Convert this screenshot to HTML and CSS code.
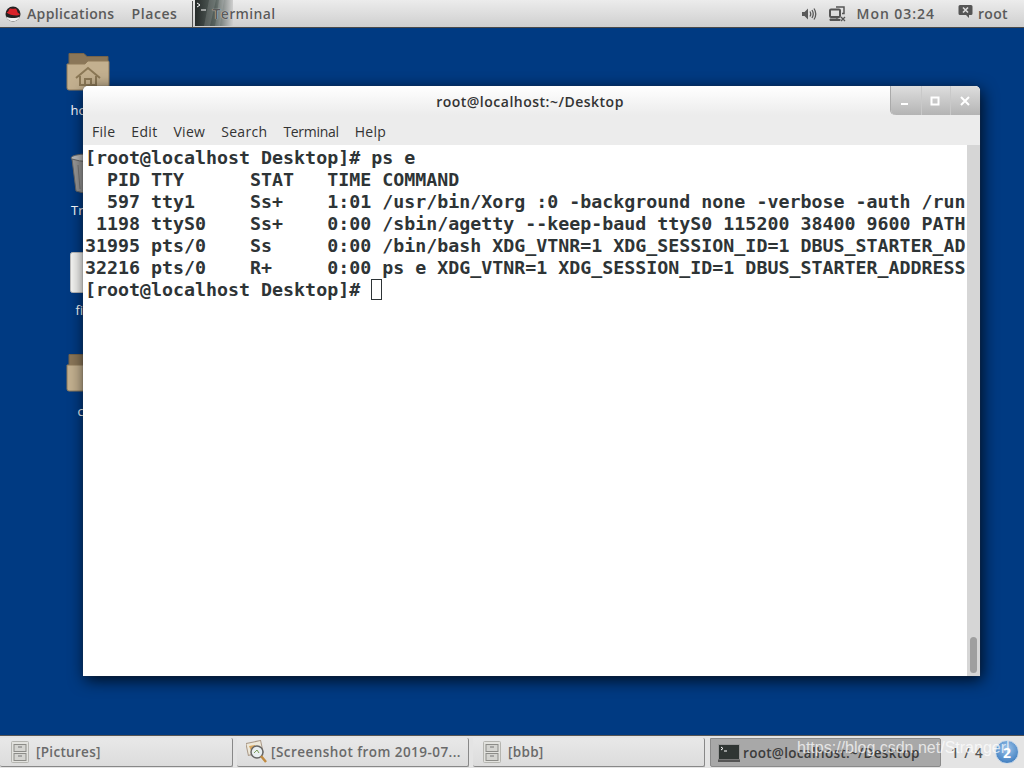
FILE: index.html
```html
<!DOCTYPE html>
<html lang="en">
<head>
<meta charset="utf-8">
<title>Desktop</title>
<link rel="stylesheet" href="styles.css">
</head>
<body>
<header class="topbar">
  <svg class="redhat" width="16" height="16" viewBox="0 0 16 16"><circle cx="8" cy="8" r="7.500" fill="#222"/><path d="M1 10.500a7.500 7.500 0 0 0 14 0C11 12.500 5 12.500 1 10.500z" fill="#f0f0f0"/><path d="M1.500 6.500C3 6 3.500 5.500 4 3.500 5 1.800 6.800 2.800 8 2.800c1.400 0 2.800-1 3.500.5l1.300 3.500c1.400.5 2.400 1.200 1.800 2-2 1.500-10 .8-13.100-2.300z" fill="#d8232a"/></svg>
  <span class="menu-item apps">Applications</span>
  <span class="menu-item places">Places</span>
  <span class="sep"></span>
  <div class="app-launcher">
    <svg class="app-thumb" width="38" height="26" viewBox="0 0 38 26"><defs><linearGradient id="fade" x1="0" x2="1" y1="0" y2="0"><stop offset="0" stop-color="#262b2a"/><stop offset=".55" stop-color="#5a6561"/><stop offset="1" stop-color="#cfcfcf"/></linearGradient></defs><rect width="38" height="26" fill="url(#fade)"/><path d="M14 0h7L15 26H9zM24 0h5l-4 26h-5z" fill="#fff" opacity=".12"/><path d="M2 3l3 2-3 2" fill="none" stroke="#fff"/><path d="M6 10h5" stroke="#fff"/></svg>
    <span class="menu-item app-label">Terminal</span>
  </div>
  <div class="tray">
    <svg class="vol" width="16" height="14" viewBox="0 0 16 14"><path d="M1 5h2.500L7 1.500v11L3.500 9H1z" fill="#5a5a5a"/><path d="M9 4.500q1.500 2.500 0 5M11 3q2.500 4 0 8M13 1.500q3.500 5.500 0 11" fill="none" stroke="#5a5a5a" stroke-width="1.300"/></svg>
    <svg class="net" width="17" height="16" viewBox="0 0 17 16"><rect x="1" y="3.500" width="10" height="7.500" rx="1" fill="none" stroke="#555" stroke-width="2"/><path d="M4 11.500h4V13H1v1.500h10V13" fill="#555" stroke="#555"/><path d="M7 1h8v6.500h-2" fill="none" stroke="#555" stroke-width="1.500"/><path d="M12 11l4 4m0-4l-4 4" stroke="#555" stroke-width="1.300"/></svg>
    <span class="menu-item clock">Mon 03:24</span>
    <svg class="chat" width="15" height="15" viewBox="0 0 15 15"><path d="M2 1h11a1.500 1.500 0 0 1 1.500 1.500v7A1.500 1.500 0 0 1 13 11h-2v3l-3-3H2A1.500 1.500 0 0 1 .5 9.500v-7A1.500 1.500 0 0 1 2 1z" fill="#555"/><path d="M5 3.500l5 5m0-5l-5 5" stroke="#ddd" stroke-width="1.600"/></svg>
    <span class="menu-item user">root</span>
  </div>
</header>

<main class="desktop">
  <div class="desk-icon home-icon">
    <svg width="44" height="40" viewBox="0 0 44 40"><path d="M3 1.500h15l3 3h21v30H3z" fill="#8a7658" stroke="#75634a"/><path d="M1 12h18l3-3h20a1 1 0 0 1 1 1v27a1 1 0 0 1-1 1H3a2 2 0 0 1-2-2z" fill="#c3b08f" stroke="#8f7b5b"/><path d="M10 26l12-10 12 10M14 24v9h16v-9M19 33v-6h6v6" fill="none" stroke="#8b7856" stroke-width="2"/></svg>
    <span class="desk-label">home</span>
  </div>
  <div class="desk-icon trash-icon">
    <svg width="44" height="42" viewBox="0 0 44 42"><ellipse cx="21" cy="5" rx="16" ry="4" fill="#bbb" stroke="#666"/><path d="M6 6l4 32q11 4 22 0l4-32q-15 5-30 0z" fill="#989898" stroke="#666"/><path d="M12 12l2 24M21 13v25M30 12l-2 24" stroke="#777"/></svg>
    <span class="desk-label">Trash</span>
  </div>
  <div class="desk-icon file-icon">
    <svg width="44" height="42" viewBox="0 0 44 42"><rect x=".5" y=".5" width="40" height="40" rx="2" fill="#f4f4f2" stroke="#bbb"/></svg>
    <span class="desk-label">file01</span>
  </div>
  <div class="desk-icon folder-icon">
    <svg width="44" height="40" viewBox="0 0 44 40"><path d="M3 1.500h15l3 3h21v30H3z" fill="#8a7658" stroke="#75634a"/><path d="M1 12h18l3-3h20a1 1 0 0 1 1 1v27a1 1 0 0 1-1 1H3a2 2 0 0 1-2-2z" fill="#c3b08f" stroke="#8f7b5b"/></svg>
    <span class="desk-label">c++</span>
  </div>

  <section class="window">
    <div class="titlebar">
      <span class="win-title">root@localhost:~/Desktop</span>
      <div class="win-buttons">
        <span class="win-btn"><svg width="10" height="10" viewBox="0 0 10 10"><rect x="1" y="7" width="7" height="2" fill="#fff"/></svg></span>
        <span class="win-btn"><svg width="10" height="10" viewBox="0 0 10 10"><rect x="1.500" y="1.500" width="7" height="7" fill="none" stroke="#fff" stroke-width="2"/></svg></span>
        <span class="win-btn"><svg width="10" height="10" viewBox="0 0 10 10"><path d="M1 1l8 8m0-8l-8 8" stroke="#fff" stroke-width="2"/></svg></span>
      </div>
    </div>
    <nav class="win-menu">
      <span>File</span><span>Edit</span><span>View</span><span>Search</span><span class="menu-tight">Terminal</span><span>Help</span>
    </nav>
    <div class="term-wrap">
      <pre class="terminal">[root@localhost Desktop]# ps e
  PID TTY      STAT   TIME COMMAND
  597 tty1     Ss+    1:01 /usr/bin/Xorg :0 -background none -verbose -auth /run
 1198 ttyS0    Ss+    0:00 /sbin/agetty --keep-baud ttyS0 115200 38400 9600 PATH
31995 pts/0    Ss     0:00 /bin/bash XDG_VTNR=1 XDG_SESSION_ID=1 DBUS_STARTER_AD
32216 pts/0    R+     0:00 ps e XDG_VTNR=1 XDG_SESSION_ID=1 DBUS_STARTER_ADDRESS
[root@localhost Desktop]# <span class="cursor"> </span></pre>
      <div class="scrollbar"><span class="thumb"></span></div>
    </div>
  </section>
</main>

<footer class="taskbar">
  <div class="task task-1">
    <svg class="cab" width="18" height="22" viewBox="0 0 18 22"><rect x=".5" y=".5" width="17" height="21" rx="1" fill="#e2e2de" stroke="#b5b5b0"/><rect x="3" y="3.500" width="12" height="7" fill="#d4d4d0" stroke="#8c8c88"/><rect x="3" y="12.500" width="12" height="7" fill="#d4d4d0" stroke="#8c8c88"/><path d="M7 6h4M7 15h4" stroke="#777"/></svg>
    <span>[Pictures]</span>
  </div>
  <div class="task task-2">
    <svg class="shot" width="22" height="24" viewBox="0 0 22 24"><rect x="1" y="2" width="15" height="12" fill="#eee8d8" stroke="#a98" transform="rotate(-12 8 8)"/><path d="M3 6l6-1 1 4-5 2z" fill="#d9a860"/><circle cx="11" cy="12" r="6" fill="#e8eef0" stroke="#666" stroke-width="1.500"/><path d="M8 13l3-3 2 3" stroke="#7a9b5a" fill="none"/><path d="M15 16l5 6" stroke="#c08a40" stroke-width="2.500"/></svg>
    <span>[Screenshot from 2019-07...</span>
  </div>
  <div class="task task-3">
    <svg class="cab" width="18" height="22" viewBox="0 0 18 22"><rect x=".5" y=".5" width="17" height="21" rx="1" fill="#e2e2de" stroke="#b5b5b0"/><rect x="3" y="3.500" width="12" height="7" fill="#d4d4d0" stroke="#8c8c88"/><rect x="3" y="12.500" width="12" height="7" fill="#d4d4d0" stroke="#8c8c88"/><path d="M7 6h4M7 15h4" stroke="#777"/></svg>
    <span>[bbb]</span>
  </div>
  <div class="task task-4">
    <svg class="term-ico" width="22" height="18" viewBox="0 0 22 18"><rect x=".5" y=".5" width="21" height="15" fill="#2f3533" stroke="#999"/><rect y="15.500" width="22" height="2.500" fill="#555"/><path d="M3 3l2 1.500L3 6M6 7h3" stroke="#fff" fill="none"/></svg>
    <span>root@localhost:~/Desktop</span>
  </div>
  <div class="pager">
    <span class="pager-count">1 / 4</span>
    <span class="badge">2</span>
  </div>
</footer>
<div class="watermark">https://blog.csdn.net/Strangerl</div>
</body>
</html>
```
FILE: styles.css
```css
html, body {
  margin: 0;
  padding: 0;
  width: 1024px;
  height: 768px;
  overflow: hidden;
}
body {
  display: flex;
  flex-direction: column;
  position: relative;
  background: #003a82;
  font-family: "Open Sans", "Noto Sans", sans-serif;
}
.topbar {
  flex: 0 0 27px;
  height: 27px;
  display: flex;
  align-items: center;
  background: linear-gradient(#ececec, #cfcfcf);
  border-bottom: 1px solid #4a4a4a;
  padding-left: 5px;
}
.menu-item {
  font-size: 14px;
  font-weight: 600;
  color: #5a5a5a;
  letter-spacing: .35px;
}
.redhat { margin-right: 6px; }
.apps { margin-right: 17px; }
.places { margin-right: 14px; letter-spacing: .6px; }
.sep {
  width: 1px;
  height: 26px;
  background: #555;
  margin-right: 2px;
}
.app-launcher {
  display: flex;
  align-items: center;
  position: relative;
  width: 84px;
  height: 27px;
}
.app-thumb { display: block; margin-bottom: 1px; }
.app-label {
  position: absolute;
  left: 18px;
  top: 4px;
  text-shadow: 0 0 1px #fff;
}
.tray {
  margin-left: auto;
  display: flex;
  align-items: center;
  padding-right: 16px;
}
.vol { margin-right: 12px; }
.net { margin-right: 11px; }
.clock { margin-right: 23px; letter-spacing: .95px; }
.chat { margin-right: 5px; margin-top: -4px; }
.desktop {
  flex: 1;
  position: relative;
}
.desk-icon {
  position: absolute;
  width: 90px;
  display: flex;
  flex-direction: column;
  align-items: center;
}
.desk-icon svg { display: block; }
.desk-label {
  color: #fff;
  font-size: 13px;
  margin-top: 6px;
}
.home-icon { left: 43px; top: 24px; }
.home-icon .desk-label { margin-top: 9px; }
.trash-icon { left: 43px; top: 125px; }
.file-icon { left: 47px; top: 224px; }
.file-icon .desk-label { margin-top: 7px; }
.folder-icon { left: 43px; top: 325px; }
.folder-icon .desk-label { margin-top: 9px; }
.window {
  position: absolute;
  left: 83px;
  top: 58px;
  width: 897px;
  height: 590px;
  display: flex;
  flex-direction: column;
  background: #ececec;
  border-radius: 5px 5px 0 0;
  box-shadow: 0 0 1px #444, 2px 4px 16px rgba(0, 0, 0, .8);
  overflow: hidden;
}
.titlebar {
  flex: 0 0 29px;
  display: flex;
  align-items: flex-start;
  justify-content: center;
  position: relative;
  background: linear-gradient(#fff, #ececec);
}
.win-title {
  font-size: 14px;
  font-weight: 600;
  color: #333;
  line-height: 26px;
  margin-top: 3px;
  letter-spacing: .5px;
  margin-left: -3px;
}
.win-buttons {
  position: absolute;
  right: 0;
  top: 0;
  height: 29px;
  display: flex;
  background: linear-gradient(#dedede, #b4b4b4);
  border-radius: 0 0 0 5px;
  box-shadow: -1px 0 0 #aaa;
}
.win-btn {
  width: 29.670px;
  display: flex;
  align-items: center;
  justify-content: center;
  border-left: 1px solid #c9c9c9;
  box-sizing: border-box;
}
.win-btn svg { margin-right: 2px; }
.win-btn:first-child { border-left: 0; }
.win-menu {
  flex: 0 0 30px;
  box-sizing: border-box;
  padding: 3px 0 0 9px;
  display: flex;
  gap: 16px;
  align-items: center;
  font-size: 14px;
  letter-spacing: .3px;
  color: #333;
}
.menu-tight { letter-spacing: -.3px; }
.term-wrap {
  flex: 1;
  display: flex;
  min-height: 0;
  background: #fff;
}
.terminal {
  flex: 1;
  min-width: 0;
  margin: 0;
  padding: 2px 0 0 2px;
  overflow: hidden;
  white-space: pre;
  font-family: "DejaVu Sans Mono", monospace;
  font-weight: 700;
  font-size: 18.3px;
  line-height: 22px;
  color: #2e3436;
}
.cursor {
  outline: 1.500px solid #2e3436;
  outline-offset: -1.500px;
}
.scrollbar {
  flex: 0 0 13px;
  display: flex;
  flex-direction: column;
  justify-content: flex-end;
  align-items: center;
  background: #d6d6d6;
  padding-bottom: 3px;
}
.thumb {
  width: 7px;
  height: 36px;
  background: #9f9f9f;
  border-radius: 4px;
}
.taskbar {
  flex: 0 0 33px;
  display: flex;
  background: #e4e4e4;
  border-top: 1px solid #555;
  box-sizing: border-box;
  padding-top: 2px;
  gap: 4px;
  font-size: 13.500px;
  font-weight: 600;
  color: #6a6a6a;
}
.task {
  display: flex;
  align-items: center;
  gap: 7px;
  box-sizing: border-box;
  padding-left: 11px;
  height: 29px;
  background: linear-gradient(#e8e8e8, #dcdcdc);
  border-right: 1px solid #888;
  border-bottom: 1px solid #888;
  border-radius: 0 2px 2px 2px;
  letter-spacing: .3px;
}
.task-1 { width: 233px; }
.task-2 { width: 232px; padding-left: 9px; gap: 3px; letter-spacing: .45px; }
.task-3 { width: 232px; padding-left: 10px; }
.task-4 {
  width: 231px;
  padding-left: 7px;
  margin-left: 1px;
  background: #a8a8a8;
  color: #3c3c3c;
  border: 1px solid #8a8a8a;
  gap: 3px;
}
.pager {
  flex: 1;
  display: flex;
  align-items: center;
  height: 29px;
  margin-left: -4px;
  padding-left: 10px;
  position: relative;
  color: #555;
}
.pager-count { letter-spacing: 1px; }
.badge {
  position: absolute;
  right: 5px;
  top: 2px;
  width: 24px;
  height: 24px;
  border-radius: 50%;
  background: radial-gradient(circle at 50% 35%, #9cc4ea, #2a6db5);
  border: 1px solid #cfdcea;
  box-sizing: border-box;
  color: #fff;
  font-size: 14px;
  font-weight: 700;
  display: flex;
  align-items: center;
  justify-content: center;
}
.watermark {
  position: absolute;
  left: 797px;
  top: 739px;
  font-family: "Liberation Sans", sans-serif;
  font-size: 16px;
  color: rgba(255, 255, 255, .72);
  white-space: nowrap;
}
```
